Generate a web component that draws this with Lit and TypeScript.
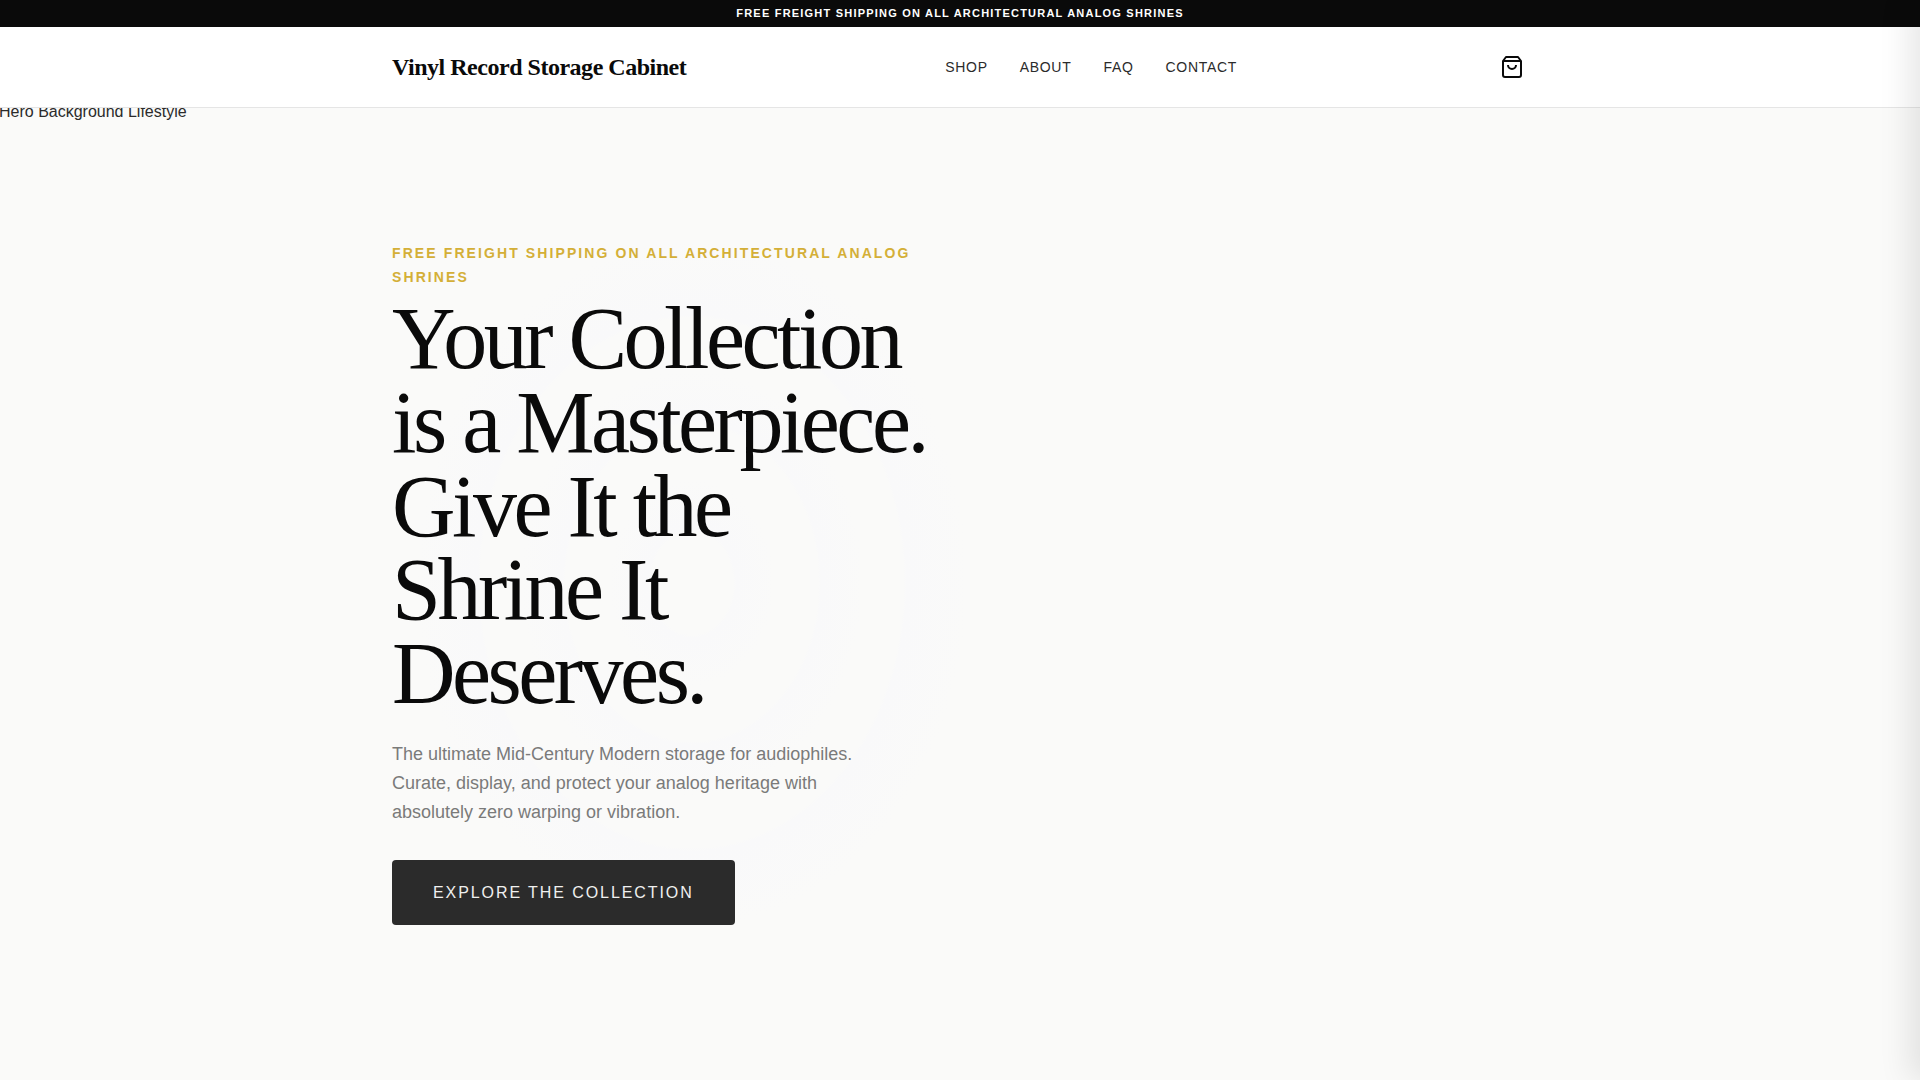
import { LitElement, html, css } from "lit";
import { customElement } from "lit/decorators.js";

@customElement("app-root")
export class AppRoot extends LitElement {
  static styles = css`
    :host {
      display: flex;
      flex-direction: column;
      position: relative;
      min-height: 100vh;
      overflow: hidden;
      background: #fafaf9;
      color: #2b2b2b;
      font-family: "Liberation Sans", Arial, sans-serif;
      font-size: 16px;
      line-height: 26px;
    }
    * {
      box-sizing: border-box;
      margin: 0;
    }
    .announcement {
      padding: 4px 16px;
      background: #0a0a0a;
      color: #ffffff;
      font-size: 11px;
      font-weight: 700;
      line-height: 19px;
      letter-spacing: 0.11em;
      text-align: center;
      text-transform: uppercase;
    }
    .header {
      position: relative;
      z-index: 1;
      background: #ffffff;
      border-bottom: 1px solid #e5e5e5;
    }
    .container {
      width: 100%;
      max-width: 1200px;
      margin: 0 auto;
      padding: 0 32px;
    }
    .bar {
      display: flex;
      align-items: center;
      justify-content: space-between;
      min-height: 80px;
    }
    .logo {
      color: #0a0a0a;
      font-family: "Liberation Serif", "Times New Roman", serif;
      font-size: 24px;
      font-weight: 700;
      letter-spacing: -0.02em;
      text-decoration: none;
    }
    .nav {
      display: flex;
      gap: 32px;
    }
    .nav-link {
      color: #2b2b2b;
      font-size: 14px;
      letter-spacing: 0.05em;
      text-decoration: none;
      text-transform: uppercase;
    }
    .cart {
      display: flex;
      padding: 4px;
      border: 0;
      background: none;
      color: #0a0a0a;
      cursor: pointer;
    }
    .hero {
      display: flex;
      flex: 1;
      align-items: center;
      position: relative;
      padding-bottom: 22px;
    }
    .backdrop {
      position: absolute;
      inset: -9px -1px 0;
    }
    .record {
      position: absolute;
      inset: 0 -48px 0 0;
      background: radial-gradient(
        275px 344px at center,
        transparent 15%,
        #f9f9fa 16%,
        transparent 30%,
        transparent 46%,
        #f9f9fa 47%,
        transparent 62%,
        transparent 77%,
        #f9f9fa 78%,
        transparent 100%
      );
    }
    .copy {
      position: relative;
      max-width: 552px;
    }
    .eyebrow,
    .title,
    .lead,
    .cta {
      position: relative;
    }
    .eyebrow {
      color: #d4af37;
      font-size: 14px;
      font-weight: 700;
      line-height: 24px;
      letter-spacing: 0.15em;
      text-transform: uppercase;
    }
    .title {
      margin: 8px 0 25px;
      color: #0a0a0a;
      font-family: "Liberation Serif", "Times New Roman", serif;
      font-size: 88px;
      font-weight: 400;
      line-height: 0.95;
      letter-spacing: -0.04em;
    }
    .lead {
      max-width: 480px;
      margin-bottom: 33px;
      color: #7a7a7a;
      font-size: 18px;
      line-height: 1.6;
    }
    .cta {
      display: inline-block;
      padding: 20px 41px;
      border-radius: 4px;
      background: #2b2b2b;
      color: #f0f0ef;
      line-height: 25px;
      letter-spacing: 0.12em;
      text-decoration: none;
      text-transform: uppercase;
    }
    .drawer {
      position: absolute;
      z-index: 2;
      top: 0;
      bottom: 0;
      left: 100%;
      width: 400px;
      background: #ffffff;
      box-shadow: -10px 0 30px rgba(0, 0, 0, 0.1);
    }
  `;

  render() {
    return html`
      <div class="announcement">Free Freight Shipping on All Architectural Analog Shrines</div>
      <header class="header">
        <div class="container bar">
          <a class="logo" href="#">Vinyl Record Storage Cabinet</a>
          <nav class="nav" aria-label="Main">
            ${["Shop", "About", "FAQ", "Contact"].map(
              (name) => html`<a class="nav-link" href="#${name.toLowerCase()}">${name}</a>`
            )}
          </nav>
          <button class="cart" type="button" aria-label="Cart">
            <svg width="24" height="24" viewBox="0 0 24 24" fill="none" stroke="currentColor" stroke-width="2" stroke-linejoin="round" aria-hidden="true">
              <path d="M6 2 3 6v14a2 2 0 0 0 2 2h14a2 2 0 0 0 2-2V6l-3-4Z" />
              <path d="M3 6h18" />
              <path d="M16 10a4 4 0 0 1-8 0" />
            </svg>
          </button>
        </div>
      </header>
      <main class="hero">
        <div class="backdrop">Hero Background Lifestyle</div>
        <div class="container">
          <div class="copy">
            <div class="record" aria-hidden="true"></div>
            <p class="eyebrow">Free Freight Shipping on All Architectural Analog Shrines</p>
            <h1 class="title">Your Collection is a Masterpiece. Give It the Shrine It Deserves.</h1>
            <p class="lead">
              The ultimate Mid-Century Modern storage for audiophiles. Curate, display, and protect
              your analog heritage with absolutely zero warping or vibration.
            </p>
            <a class="cta" href="#shop">Explore the Collection</a>
          </div>
        </div>
      </main>
      <aside class="drawer" aria-hidden="true"></aside>
    `;
  }
}
